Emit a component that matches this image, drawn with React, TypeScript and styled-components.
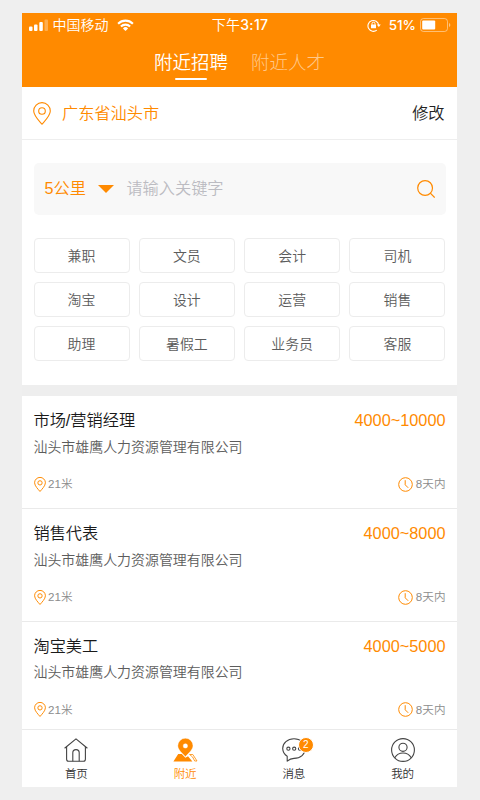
import React from "react";
import styled, { createGlobalStyle } from "styled-components";

const ORANGE = "#ff8a00";

const GlobalStyle = createGlobalStyle`
  * { box-sizing: border-box; }
  body {
    margin: 0;
    background: #efefef;
    font-family: "Liberation Sans", "Noto Sans CJK SC", sans-serif;
    font-weight: 350;
  }
  button, input { font: inherit; padding: 0; margin: 0; border: 0; background: none; }
`;

const Page = styled.div`
  height: 800px;
  padding: 13px 23px 13px 22px;
  overflow: hidden;
`;

const Phone = styled.main`
  display: flex;
  flex-direction: column;
  width: 435px;
  height: 774px;
  background: #eeeeee;
`;

const Header = styled.header`
  height: 74px;
  flex: none;
  background: ${ORANGE};
  color: #fff;
`;

const StatusBar = styled.div`
  display: grid;
  grid-template-columns: 1fr auto 1fr;
  align-items: center;
  height: 24px;
  padding: 0 6px 0 7px;
  font: 350 14px/24px Inter, "Noto Sans CJK SC", sans-serif;
`;

const StatusGroup = styled.div<{ $end?: boolean }>`
  display: flex;
  align-items: center;
  justify-content: ${(p) => (p.$end ? "flex-end" : "flex-start")};
`;

const Carrier = styled.span`
  margin: 0 8px 0 4.5px;
`;

const Clock = styled.span`
  font-weight: 350;
  letter-spacing: 0.3px;
  b { font-weight: 500; }
`;

const Percent = styled.span`
  margin: 0 4px 0 8px;
  font-weight: 500;
  font-size: 13.5px;
`;

const HeaderTabs = styled.nav`
  display: flex;
  justify-content: center;
  gap: 23px;
`;

const HeaderTab = styled.button<{ $active?: boolean }>`
  display: flex;
  flex-direction: column;
  align-items: center;
  font-size: 18.5px;
  line-height: 28px;
  padding-top: 12px;
  color: ${(p) => (p.$active ? "#fff" : "#ffc88a")};
  font-weight: ${(p) => (p.$active ? 350 : 300)};
  &::after {
    content: "";
    width: 32px;
    height: 2px;
    margin: 1px 0 0 0;
    border-radius: 1px;
    background: ${(p) => (p.$active ? "#fff" : "transparent")};
  }
`;

const LocationRow = styled.section`
  display: flex;
  align-items: center;
  flex: none;
  height: 52px;
  padding: 0 12.5px 0 11px;
  background: #fff;
  font-size: 16.2px;
  line-height: 24px;
  color: ${ORANGE};
`;

const Place = styled.span`
  flex: 1;
  margin-left: 11px;
`;

const EditButton = styled.button`
  color: #222;
`;

const SearchPanel = styled.section`
  flex: none;
  height: 245.5px;
  padding: 23px 11.5px 0;
  border-top: 1px solid #eee;
  background: #fff;
`;

const SearchBox = styled.div`
  display: flex;
  align-items: center;
  height: 51.5px;
  padding: 0 11px;
  border-radius: 5px;
  background: #f8f8f8;
  font-size: 16.2px;
`;

const Distance = styled.button`
  display: flex;
  align-items: center;
  gap: 12px;
  line-height: 24px;
  color: ${ORANGE};
`;

const DistanceText = styled.span`
  padding-bottom: 2px;
`;

const Keyword = styled.input`
  flex: 1;
  min-width: 0;
  height: 30px;
  margin-left: 12.5px;
  outline: 0;
  &::placeholder { color: #bcbcc2; opacity: 1; }
`;

const TagGrid = styled.div`
  display: grid;
  grid-template-columns: repeat(4, 96px);
  justify-content: space-between;
  row-gap: 9px;
  margin-top: 23.5px;
`;

const Tag = styled.button`
  height: 35px;
  padding-top: 1px;
  border: 1px solid #ececec;
  border-radius: 4px;
  font-size: 13.9px;
  line-height: 32px;
  color: #5c5c5c;
`;

const JobList = styled.section`
  flex: 1;
  min-height: 0;
  margin-top: 11.5px;
  overflow: hidden;
  background: #fff;
`;

const Job = styled.article`
  height: 112.75px;
  padding: 11.4px 11.5px 0;
  border-bottom: 1px solid #eaeaea;
`;

const JobLine = styled.div`
  display: flex;
  justify-content: space-between;
  font-size: 16.2px;
  line-height: 26px;
`;

const JobTitle = styled.h2`
  margin: 0;
  font-size: inherit;
  font-weight: inherit;
  color: #1a1a1a;
`;

const Salary = styled.span`
  font-size: 16.3px;
  color: ${ORANGE};
`;

const Company = styled.div`
  margin-top: 0.6px;
  font-size: 13.95px;
  line-height: 26px;
  color: #5c5c5c;
`;

const JobMeta = styled.div`
  display: flex;
  justify-content: space-between;
  margin-top: 14.5px;
  font-size: 11.6px;
  line-height: 20px;
  color: #8c8c8c;
`;

const MetaItem = styled.span`
  display: flex;
  align-items: center;
  gap: 2.5px;
`;

const TabBar = styled.nav`
  display: grid;
  grid-template-columns: repeat(4, 1fr);
  flex: none;
  height: 58px;
  border-top: 1px solid #eaeaea;
  background: #fff;
`;

const TabItem = styled.button<{ $active?: boolean }>`
  display: flex;
  flex-direction: column;
  align-items: center;
  padding-top: 8px;
  font-size: 11.5px;
  line-height: 22px;
  color: ${(p) => (p.$active ? ORANGE : "#333")};
`;

const IconSlot = styled.span`
  position: relative;
  display: block;
  height: 25px;
  svg { display: block; }
`;

const Badge = styled.span`
  position: absolute;
  top: -1px;
  left: 16px;
  width: 16px;
  height: 16px;
  border: 1px solid #fff;
  border-radius: 50%;
  background: ${ORANGE};
  color: #fff;
  font-size: 10px;
  line-height: 14px;
  text-align: center;
`;

const SignalIcon = () => (
  <svg width="19" height="12" viewBox="0 0 19 12" fill="#fff">
    <rect x="0" y="7.5" width="3.5" height="4.5" rx="1" />
    <rect x="5" y="5.5" width="3.5" height="6.5" rx="1" />
    <rect x="10.3" y="3" width="3.5" height="9" rx="1" />
    <rect x="15.5" y="0.5" width="3.5" height="11.5" rx="1" opacity=".3" />
  </svg>
);

const WifiIcon = () => (
  <svg width="17" height="12" viewBox="0 0 17 12" fill="none" stroke="#fff" strokeWidth="2.1">
    <path d="M1.1 4.7a10.5 10.5 0 0 1 14.8 0" />
    <path d="M3.9 7.5a6.5 6.5 0 0 1 9.2 0" />
    <path d="M8.5 12 5.9 9.4a3.7 3.7 0 0 1 5.2 0z" fill="#fff" stroke="none" />
  </svg>
);

const RotationLockIcon = () => (
  <svg width="14" height="13" viewBox="0 0 14 13" fill="none" stroke="#fff">
    <path d="M9.8 11.1A5.4 5.4 0 1 1 11.7 6" strokeWidth="1.1" />
    <path d="M9.8 5.6h4L11.8 8z" fill="#fff" stroke="none" />
    <rect x="4" y="5.5" width="5" height="3.8" rx=".5" fill="#fff" stroke="none" />
    <path d="M5 5.8V4.7a1.5 1.5 0 0 1 3 0v1.1" />
  </svg>
);

const BatteryIcon = () => (
  <svg width="31" height="14" viewBox="0 0 31 14">
    <rect x=".5" y=".5" width="27" height="13" rx="3" fill="none" stroke="#fff" opacity=".45" />
    <rect x="2.2" y="2.5" width="13" height="9" rx="1" fill="#fff" />
    <path d="M29 5v4c1.8-.6 1.8-3.4 0-4z" fill="#fff" opacity=".5" />
  </svg>
);

const PinIcon = ({ width, height, stroke }: { width: number; height: number; stroke: number }) => (
  <svg width={width} height={height} viewBox="0 0 18 23" fill="none" stroke={ORANGE} strokeWidth={stroke}>
    <path d="M9 22.2C6.5 19.2.7 13.6.7 8.9a8.3 8.3 0 0 1 16.6 0c0 4.7-5.8 10.3-8.3 13.3z" />
    <circle cx="9" cy="9" r="3.3" />
  </svg>
);

const CaretIcon = () => (
  <svg width="16" height="8" viewBox="0 0 16 8">
    <path d="M0 0h16L8 8z" fill={ORANGE} />
  </svg>
);

const SearchIcon = () => (
  <svg width="18" height="18" viewBox="0 0 18 18" fill="none" stroke={ORANGE} strokeWidth="1.2">
    <circle cx="8.1" cy="8" r="7.4" />
    <path d="m13.3 13.2 4.4 4.4" />
  </svg>
);

const TimeIcon = () => (
  <svg width="15" height="15" viewBox="0 0 15 15" fill="none" stroke={ORANGE} strokeWidth="1">
    <circle cx="7.5" cy="7.5" r="6.8" />
    <path d="M7.2 3.2v4.6l3 3" />
  </svg>
);

const HomeIcon = () => (
  <svg width="24" height="24" viewBox="0 0 24 24" fill="none" stroke="#444" strokeWidth="1.1" strokeLinejoin="round">
    <path d="M.6 10.2 12 .9l11.4 9.3" />
    <path d="M2.6 8.8v12.4c0 1.3.7 2 2 2h14.8c1.3 0 2-.7 2-2V8.8" />
    <path d="M8.8 23.2v-8.4a3.2 3.2 0 0 1 6.4 0v8.4" />
  </svg>
);

const NearbyIcon = () => (
  <svg width="25" height="24" viewBox="0 0 25 24">
    <path d="M5.2 16.1h3.6l3.6 3.6 2.6-1.4 4.4 5.1H.4z" fill={ORANGE} />
    <path d="M16.6 16.5h3.2l4.2 6.5h-2.3L19.6 19z" fill="none" stroke={ORANGE} strokeWidth=".8" />
    <path
      fillRule="evenodd"
      d="M12.4 18.7C10 15.8 4.8 11.9 4.8 7.8a7.6 7.6 0 0 1 15.2 0c0 4.1-5.2 8-7.6 10.9zM12.4 5.7a2.2 2.2 0 1 0 0 4.4 2.2 2.2 0 0 0 0-4.4z"
      fill={ORANGE}
      stroke="#fff"
      strokeWidth=".4"
    />
  </svg>
);

const MessageIcon = () => (
  <svg width="24" height="24" viewBox="0 0 24 24" fill="none" stroke="#444" strokeWidth="1.1" strokeLinejoin="round">
    <path d="M5.2 23.2v-5A9.6 9.6 0 0 1 .7 10.6C.7 5 5.5.7 12 .7S23.3 5 23.3 10.6 18.5 20.4 12 20.4c-2.7 0-4.8 1-6.8 2.8z" />
    <circle cx="6.4" cy="10.7" r="1.6" />
    <circle cx="12.2" cy="10.7" r="1.6" />
    <circle cx="18" cy="10.7" r="1.6" />
  </svg>
);

const ProfileIcon = () => (
  <svg width="24" height="24" viewBox="0 0 24 24" fill="none" stroke="#444" strokeWidth="1.1">
    <circle cx="12" cy="12" r="11.4" />
    <circle cx="12" cy="9.3" r="4.1" />
    <path d="M3.8 19.7c3.7-6.3 12.7-6.3 16.4 0" />
  </svg>
);

const tags = ["兼职", "文员", "会计", "司机", "淘宝", "设计", "运营", "销售", "助理", "暑假工", "业务员", "客服"];

const jobs = [
  { title: "市场/营销经理", salary: "4000~10000" },
  { title: "销售代表", salary: "4000~8000" },
  { title: "淘宝美工", salary: "4000~5000" },
];

const tabs = [
  { label: "首页", Icon: HomeIcon },
  { label: "附近", Icon: NearbyIcon, active: true },
  { label: "消息", Icon: MessageIcon, badge: 2 },
  { label: "我的", Icon: ProfileIcon },
];

export default function App() {
  return (
    <Page lang="zh-CN">
      <GlobalStyle />
      <Phone>
        <Header>
          <StatusBar>
            <StatusGroup>
              <SignalIcon />
              <Carrier>中国移动</Carrier>
              <WifiIcon />
            </StatusGroup>
            <Clock>
              下午<b>3:17</b>
            </Clock>
            <StatusGroup $end>
              <RotationLockIcon />
              <Percent>51%</Percent>
              <BatteryIcon />
            </StatusGroup>
          </StatusBar>
          <HeaderTabs>
            <HeaderTab $active>附近招聘</HeaderTab>
            <HeaderTab>附近人才</HeaderTab>
          </HeaderTabs>
        </Header>

        <LocationRow>
          <PinIcon width={18} height={23} stroke={1.1} />
          <Place>广东省汕头市</Place>
          <EditButton>修改</EditButton>
        </LocationRow>

        <SearchPanel>
          <SearchBox>
            <Distance>
              <DistanceText>5公里</DistanceText>
              <CaretIcon />
            </Distance>
            <Keyword placeholder="请输入关键字" />
            <SearchIcon />
          </SearchBox>
          <TagGrid>
            {tags.map((tag) => (
              <Tag key={tag}>{tag}</Tag>
            ))}
          </TagGrid>
        </SearchPanel>

        <JobList>
          {jobs.map((job) => (
            <Job key={job.title}>
              <JobLine>
                <JobTitle>{job.title}</JobTitle>
                <Salary>{job.salary}</Salary>
              </JobLine>
              <Company>汕头市雄鹰人力资源管理有限公司</Company>
              <JobMeta>
                <MetaItem>
                  <PinIcon width={12} height={15} stroke={1.5} />
                  21米
                </MetaItem>
                <MetaItem>
                  <TimeIcon />
                  8天内
                </MetaItem>
              </JobMeta>
            </Job>
          ))}
        </JobList>

        <TabBar>
          {tabs.map(({ label, Icon, active, badge }) => (
            <TabItem key={label} $active={active}>
              <IconSlot>
                <Icon />
                {badge && <Badge>{badge}</Badge>}
              </IconSlot>
              {label}
            </TabItem>
          ))}
        </TabBar>
      </Phone>
    </Page>
  );
}
